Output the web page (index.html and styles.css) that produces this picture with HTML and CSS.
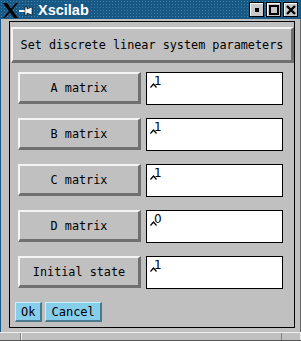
FILE: index.html
```html
<!DOCTYPE html>
<html>
<head>
<meta charset="utf-8">
<link rel="stylesheet" href="styles.css">
</head>
<body>
<div class="window">
  <div class="titlebar">
    <svg class="xicon" width="34" height="18" viewBox="0 0 34 18">
      <path d="M2 2 L6 2 L17 17 L13 17 Z" fill="#000"/>
      <path d="M15 2 L17 2 L4 17 L2 17 Z" fill="#000"/>
      <rect x="18" y="9" width="6" height="2" fill="#fff"/>
      <path d="M24 6 L26 6 L26 8 L31 6 L31 14 L26 12 L26 14 L24 14 Z" fill="#fff" stroke="#000" stroke-width="0.6"/>
    </svg>
    <span class="title">Xscilab</span>
    <div class="tbtns">
      <div class="tbtn"><span class="dot"></span></div>
      <div class="tbtn"><span class="sq"></span></div>
      <div class="tbtn"><svg width="10" height="10" viewBox="0 0 10 10"><path d="M1 1 L9 9 M9 1 L1 9" stroke="#000" stroke-width="2.4"/></svg></div>
    </div>
  </div>
  <div class="body">
    <div class="frame">
      <div class="heading">Set discrete linear system parameters</div>
      <div class="rows">
        <div class="row"><div class="btn">A matrix</div><div class="field"><svg class="caret" width="7" height="5" viewBox="0 0 7 5"><path d="M0.5 4.5 L3.5 1 L6.5 4.5" stroke="#000" stroke-width="1.2" fill="none"/></svg><span class="val">1</span></div></div>
        <div class="row"><div class="btn">B matrix</div><div class="field"><svg class="caret" width="7" height="5" viewBox="0 0 7 5"><path d="M0.5 4.5 L3.5 1 L6.5 4.5" stroke="#000" stroke-width="1.2" fill="none"/></svg><span class="val">1</span></div></div>
        <div class="row"><div class="btn">C matrix</div><div class="field"><svg class="caret" width="7" height="5" viewBox="0 0 7 5"><path d="M0.5 4.5 L3.5 1 L6.5 4.5" stroke="#000" stroke-width="1.2" fill="none"/></svg><span class="val">1</span></div></div>
        <div class="row"><div class="btn">D matrix</div><div class="field"><svg class="caret" width="7" height="5" viewBox="0 0 7 5"><path d="M0.5 4.5 L3.5 1 L6.5 4.5" stroke="#000" stroke-width="1.2" fill="none"/></svg><span class="val">0</span></div></div>
        <div class="row"><div class="btn">Initial state</div><div class="field"><svg class="caret" width="7" height="5" viewBox="0 0 7 5"><path d="M0.5 4.5 L3.5 1 L6.5 4.5" stroke="#000" stroke-width="1.2" fill="none"/></svg><span class="val">1</span></div></div>
      </div>
      <div class="actions">
        <div class="abtn">Ok</div>
        <div class="abtn">Cancel</div>
      </div>
    </div>
  </div>
  <div class="bottom"><span class="seg left"></span><span class="seg mid"></span><span class="seg right"></span></div>
</div>
</body>
</html>
```
FILE: styles.css
```css
html, body { margin: 0; padding: 0; }
body { width: 301px; height: 341px; overflow: hidden; background: #c0c0c0; }
.window { width: 301px; height: 341px; display: flex; flex-direction: column; box-sizing: border-box; background: #c0c0c0; }
.titlebar {
  height: 19px; flex: none; display: flex; align-items: center; position: relative;
  background-color: #185884;
  background-image: radial-gradient(circle, #3c7eae 0.6px, transparent 0.9px);
  background-size: 3px 3px;
}
.xicon { flex: none; margin-left: 1px; }
.title { font-family: "Liberation Sans", Arial, sans-serif; font-weight: bold; font-size: 14.5px; color: #fff; margin-left: 3px; background: #185884; padding-right: 2px; }
.tbtns { margin-left: auto; display: flex; gap: 2px; margin-right: 3px; }
.tbtn { width: 13px; height: 13px; background: #c8c8c8; border: 1px solid #000; box-shadow: inset 1px 1px #fff; display: flex; align-items: center; justify-content: center; }
.dot { width: 4px; height: 4px; background: #000; }
.sq { width: 6px; height: 6px; border: 2px solid #000; }
.body { flex: 1; display: flex; padding: 2px 5px 4px 8px; border-left: 1px solid #1a5a86; border-right: 1px solid #666; }
.frame { flex: 1; border: 1px solid #000; display: flex; flex-direction: column; padding: 5px 0 0 1px; }
.heading {
  height: 31px; background: #c0c0c0;
  border-top: 2px solid #f4f4f4; border-left: 2px solid #f4f4f4;
  border-bottom: 3px solid #707070; border-right: 3px solid #707070;
  font-family: "DejaVu Sans Mono", monospace; font-size: 11.8px; color: #000;
  display: flex; align-items: center; justify-content: center;
}
.rows { display: flex; flex-direction: column; gap: 13px; margin-top: 9px; padding-left: 7px; }
.row { display: flex; gap: 5px; height: 33px; }
.btn {
  width: 118px; height: 27px; background: #c0c0c0;
  border-top: 2px solid #f4f4f4; border-left: 2px solid #f4f4f4;
  border-bottom: 3px solid #707070; border-right: 3px solid #707070;
  font-family: "DejaVu Sans Mono", monospace; font-size: 11.8px; color: #000;
  display: flex; align-items: center; justify-content: center;
}
.field { width: 135px; height: 31px; background: #fff; border: 1px solid #000; position: relative; }
.caret { position: absolute; left: 3px; top: 10px; }
.val { position: absolute; left: 7px; top: 2px; font-family: "DejaVu Sans", sans-serif; font-size: 12px; line-height: 12px; color: #000; }
.actions { display: flex; gap: 3px; margin-top: auto; margin-bottom: 5px; padding-left: 4px; }
.abtn {
  height: 17px; padding: 0 5px; background: #87ceeb;
  border-top: 1px solid #c8f0ff; border-left: 1px solid #c8f0ff;
  border-bottom: 2px solid #4a7a8e; border-right: 2px solid #4a7a8e;
  font-family: "DejaVu Sans Mono", monospace; font-size: 12px; color: #000;
  display: flex; align-items: center;
}
.bottom { height: 7px; flex: none; display: flex; border-top: 1px solid #f0f0f0; background: #c0c0c0; border-bottom: 1px solid #555; }
.seg { display: block; height: 100%; }
.seg.left { width: 20px; border-right: 1px solid #808080; }
.seg.mid { flex: 1; border-left: 1px solid #f0f0f0; }
.seg.right { width: 18px; border-left: 1px solid #808080; border-right: 1px solid #f0f0f0; }
```
